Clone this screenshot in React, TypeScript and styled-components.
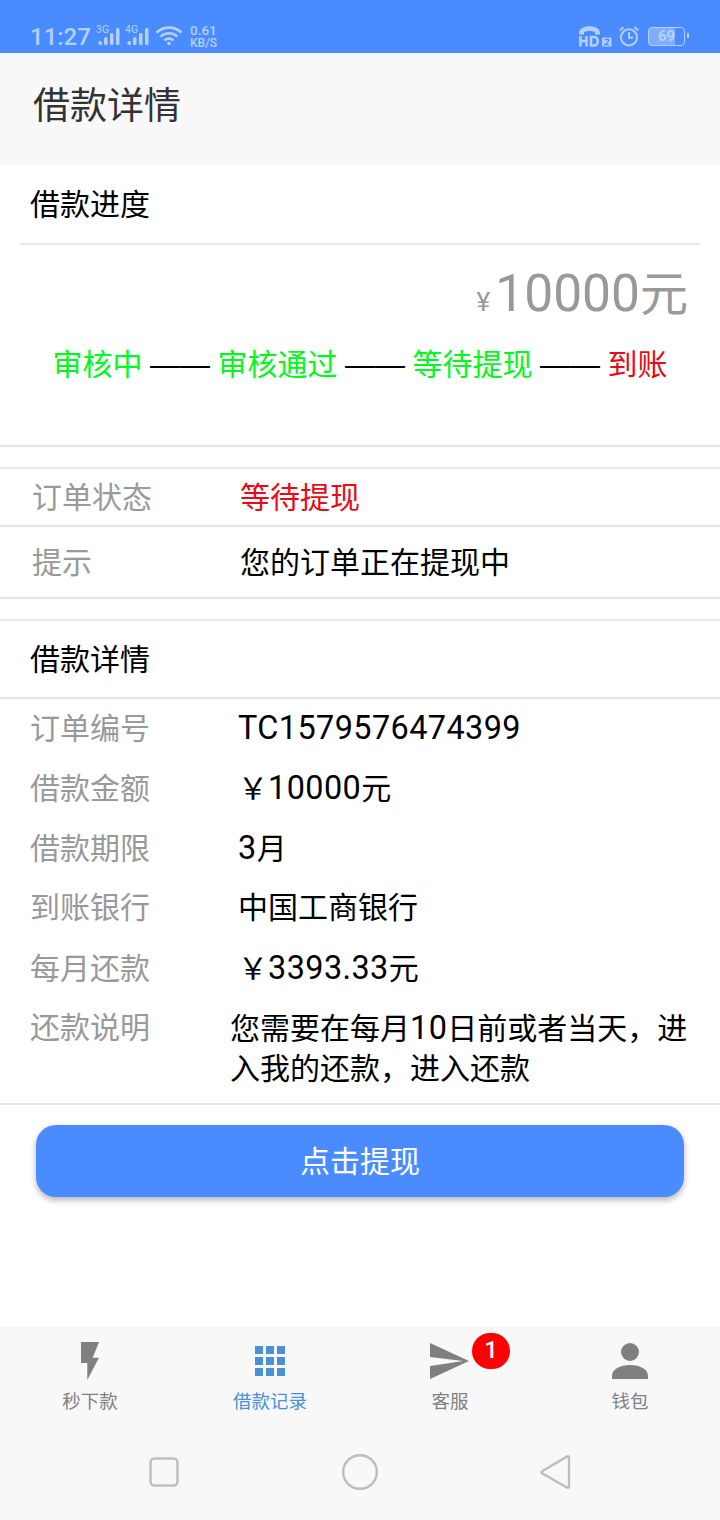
import React from "react";
import styled, { createGlobalStyle } from "styled-components";

const Global = createGlobalStyle`
  html, body { margin: 0; padding: 0; background: #fff; }
  body { font-family: "Roboto", "Noto Sans CJK SC", sans-serif; }
  * { box-sizing: border-box; }
`;

const Page = styled.div`
  width: 720px;
  height: 1520px;
  display: flex;
  flex-direction: column;
  overflow: hidden;
  background: #fff;
`;

const Latin = styled.span`
  font-size: 1.08em;
  letter-spacing: 0.013em;
`;

const StatusBar = styled.div`
  height: 53px;
  flex: none;
  background: #4a8cff;
  display: flex;
  align-items: flex-end;
  justify-content: space-between;
  padding: 0 35px 1px 31px;
  color: #b5d0ff;
`;
const StatusGroup = styled.div`
  display: flex;
  align-items: center;
  height: 32px;
`;
const Clock = styled.span`
  font: 500 24px/30px "Roboto", sans-serif;
  padding-top: 2px;
  width: 67px;
  margin-left: -1px;
  white-space: nowrap;
`;
const SignalIcon = styled.svg`
  width: 24px;
  height: 20px;
  margin-right: 5px;
  fill: #b5d0ff;
  overflow: visible;
`;
const Speed = styled.span`
  font: 500 12px/13px "Roboto", sans-serif;
  margin-left: 7px;
  padding-top: 2px;
  display: flex;
  flex-direction: column;
`;
const SpeedValue = styled.span`
  font-size: 13.5px;
`;
const Battery = styled.div`
  width: 37px;
  height: 19px;
  border: 1.5px solid #b5d0ff;
  border-radius: 4px;
  font: 700 15px/16px "Roboto", sans-serif;
  text-align: center;
  background: linear-gradient(90deg, #7fadff 73%, transparent 73%);
  margin-left: 8px;
  position: relative;
  &::after {
    content: "";
    position: absolute;
    right: -5px;
    top: 5px;
    width: 2px;
    height: 5px;
    background: #b5d0ff;
  }
`;

const Header = styled.header`
  height: 112px;
  flex: none;
  background: #f8f8f8;
  display: flex;
  align-items: center;
  padding: 0 33px 12px;
  font-size: 37px;
  color: #333;
`;

const ProgressCard = styled.section`
  height: 282px;
  flex: none;
  padding: 0 20px;
  border-bottom: 2px solid #e5e5e5;
  display: flex;
  flex-direction: column;
`;
const CardTitle = styled.div`
  height: 80px;
  flex: none;
  display: flex;
  align-items: center;
  padding: 0 10px 4px;
  font-size: 30px;
  color: #000;
  border-bottom: 2px solid #e5e5e5;
`;
const Amount = styled.div`
  display: flex;
  justify-content: flex-end;
  align-items: baseline;
  padding: 17px 12px 0 0;
  color: #999;
  font-size: 48px;
  line-height: 64px;
`;
const AmountDigits = styled.span`
  font-size: 51.5px;
`;
const Yen = styled.span`
  font-size: 26px;
  margin-right: 5px;
`;
const Steps = styled.div`
  margin-top: 9px;
  display: flex;
  justify-content: center;
  font-size: 30px;
  line-height: 44px;
  white-space: pre;
  color: #000;
`;
const Step = styled.span<{ $tone: "green" | "red" }>`
  color: ${(p) => (p.$tone === "green" ? "#00f820" : "#e80a14")};
`;
const Dash = styled.span`
  margin: 0 7.5px;
  font-family: "Liberation Sans", sans-serif;
`;

const Spacer = styled.div`
  height: 20px;
  flex: none;
`;

const StatusSection = styled.section`
  flex: none;
  border-top: 2px solid #e5e5e5;
  border-bottom: 2px solid #e5e5e5;
`;
const StatusRow = styled.div<{ $h: number; $divider?: boolean }>`
  height: ${(p) => p.$h}px;
  display: flex;
  align-items: center;
  padding: 0 0 4px 32px;
  font-size: 30px;
  border-bottom: ${(p) => (p.$divider ? "2px solid #e5e5e5" : "none")};
`;
const StatusLabel = styled.span`
  width: 208px;
  color: #999;
`;
const StatusValue = styled.span<{ $red?: boolean }>`
  color: ${(p) => (p.$red ? "#e80a14" : "#000")};
`;

const DetailSection = styled.section`
  flex: none;
  border-top: 2px solid #e5e5e5;
  border-bottom: 2px solid #e5e5e5;
  height: 486px;
`;
const DetailTitle = styled.div`
  height: 78px;
  display: flex;
  align-items: center;
  padding: 0 30px 4px;
  font-size: 30px;
  color: #000;
  border-bottom: 2px solid #e5e5e5;
`;
const DetailList = styled.div`
  display: flex;
  flex-direction: column;
  margin-top: -1px;
`;
const DetailRow = styled.div`
  height: 60px;
  display: flex;
  align-items: baseline;
  line-height: 60px;
  padding-left: 30px;
  font-size: 30px;
  white-space: pre;
`;
const DetailLabel = styled.span`
  width: 208px;
  flex: none;
  color: #999;
`;
const DetailValue = styled.span`
  color: #000;
`;
const NoteRow = styled.div`
  display: flex;
  padding: 0 30px;
  font-size: 30px;
  line-height: 40px;
  margin-top: 10px;
`;
const NoteLabel = styled.span`
  width: 200px;
  flex: none;
  color: #999;
`;
const NoteText = styled.span`
  color: #000;
`;

const ActionWrap = styled.div`
  flex: 1;
  padding: 20px 36px 0;
`;
const PrimaryButton = styled.button`
  width: 648px;
  height: 72px;
  border: 0;
  border-radius: 20px;
  background: #4a8cff;
  color: #fff;
  padding: 0 0 4px;
  font: 400 30px "Roboto", "Noto Sans CJK SC", sans-serif;
  box-shadow: 0 3px 6px rgba(0, 0, 0, 0.3);
`;

const BottomArea = styled.div`
  height: 193px;
  flex: none;
  background: #f8f8f8;
  display: flex;
  flex-direction: column;
`;
const TabBar = styled.nav`
  display: grid;
  grid-template-columns: repeat(4, 180px);
  height: 100px;
  padding-top: 13px;
`;
const Tab = styled.div<{ $active?: boolean }>`
  display: flex;
  flex-direction: column;
  align-items: center;
  color: ${(p) => (p.$active ? "#4a90d9" : "#808080")};
  font-size: 18.5px;
  line-height: 26px;
  position: relative;
`;
const TabIcon = styled.div`
  height: 42px;
  width: 100%;
  display: flex;
  justify-content: center;
  align-items: center;
  margin-bottom: 7px;
`;
const Badge = styled.span`
  position: absolute;
  left: 112px;
  top: -7px;
  width: 38px;
  height: 36px;
  border-radius: 18px;
  background: #ff0000;
  color: #fff;
  font: 500 24px/34px "Roboto", sans-serif;
  text-align: center;
`;
const NavKeys = styled.div`
  height: 89px;
  display: flex;
  justify-content: center;
  align-items: center;
  gap: 160px;
`;
const NavKey = styled.svg`
  width: 36px;
  height: 36px;
  fill: none;
  stroke: #bdbdbd;
  stroke-width: 2.4;
  stroke-linejoin: round;
`;

function Signal({ label }: { label: string }) {
  return (
    <SignalIcon viewBox="0 0 24 20">
      <text x="-1" y="7" fontSize="10.5" fontFamily="Roboto, sans-serif">{label}</text>
      <rect x="1.5" y="15" width="3.5" height="4" rx="1.5" />
      <rect x="7" y="11" width="3.5" height="8" rx="1.5" />
      <rect x="13" y="7" width="3.5" height="12" rx="1.5" />
      <rect x="19" y="2" width="3.5" height="17" rx="1.5" />
    </SignalIcon>
  );
}

export default function App() {
  return (
    <Page>
      <Global />
      <StatusBar>
        <StatusGroup>
          <Clock>11:27</Clock>
          <Signal label="3G" />
          <Signal label="4G" />
          <svg width="28" height="20" viewBox="0 0 28 20" fill="none" stroke="#b5d0ff" strokeWidth="2.6">
            <path d="M1.5 6.5C9 0 19 0 26.5 6.5" />
            <path d="M5.5 10.5C10.5 6.2 17.5 6.2 22.5 10.5" />
            <path d="M9.5 14.5C12.2 12.3 15.8 12.3 18.5 14.5" />
            <circle cx="14" cy="17.5" r="1.8" fill="#b5d0ff" stroke="none" />
          </svg>
          <Speed>
            <SpeedValue>0.61</SpeedValue>
            <span>KB/S</span>
          </Speed>
        </StatusGroup>
        <StatusGroup>
          <svg width="34" height="22" viewBox="0 0 34 22" fill="none">
            <path d="M1 8C1 -1 22 -1 22 8V9.5H17V7C14 5.5 9 5.5 6 7V9.5H1Z" fill="#b5d0ff" />
            <path d="M2.5 11V21.5M8.5 11V21.5M2.5 16H8.5" stroke="#b5d0ff" strokeWidth="2.6" />
            <path d="M13 12V20.5H16C21 20.5 21 12 16 12Z" stroke="#b5d0ff" strokeWidth="2.6" />
            <rect x="24" y="12.5" width="9.5" height="9" rx="1" fill="#b5d0ff" />
            <path d="M26.7 15Q29 13.5 30.8 15Q30.8 17 26.7 19.7H31" stroke="#4a8cff" strokeWidth="1.3" />
          </svg>
          <svg width="22" height="22" viewBox="0 0 24 24" fill="none" stroke="#b5d0ff" strokeWidth="2.2" style={{ marginLeft: 6 }}>
            <circle cx="12" cy="13.5" r="8.8" />
            <path d="M12 8V14H16.5" />
            <path d="M2 6L6 2.5M22 6L18 2.5" />
          </svg>
          <Battery>69</Battery>
        </StatusGroup>
      </StatusBar>

      <Header>借款详情</Header>

      <ProgressCard>
        <CardTitle>借款进度</CardTitle>
        <Amount>
          <Yen>¥</Yen>
          <AmountDigits>10000</AmountDigits>元
        </Amount>
        <Steps>
          <Step $tone="green">审核中</Step>
          <Dash>——</Dash>
          <Step $tone="green">审核通过</Step>
          <Dash>——</Dash>
          <Step $tone="green">等待提现</Step>
          <Dash>——</Dash>
          <Step $tone="red">到账</Step>
        </Steps>
      </ProgressCard>

      <Spacer />

      <StatusSection>
        <StatusRow $h={58} $divider>
          <StatusLabel>订单状态</StatusLabel>
          <StatusValue $red>等待提现</StatusValue>
        </StatusRow>
        <StatusRow $h={70}>
          <StatusLabel>提示</StatusLabel>
          <StatusValue>您的订单正在提现中</StatusValue>
        </StatusRow>
      </StatusSection>

      <Spacer />

      <DetailSection>
        <DetailTitle>借款详情</DetailTitle>
        <DetailList>
          <DetailRow>
            <DetailLabel>订单编号</DetailLabel>
            <DetailValue><Latin>TC1579576474399</Latin></DetailValue>
          </DetailRow>
          <DetailRow>
            <DetailLabel>借款金额</DetailLabel>
            <DetailValue>￥<Latin>10000</Latin>元</DetailValue>
          </DetailRow>
          <DetailRow>
            <DetailLabel>借款期限</DetailLabel>
            <DetailValue><Latin>3</Latin>月</DetailValue>
          </DetailRow>
          <DetailRow>
            <DetailLabel>到账银行</DetailLabel>
            <DetailValue>中国工商银行</DetailValue>
          </DetailRow>
          <DetailRow>
            <DetailLabel>每月还款</DetailLabel>
            <DetailValue>￥<Latin>3393.33</Latin>元</DetailValue>
          </DetailRow>
          <NoteRow>
            <NoteLabel>还款说明</NoteLabel>
            <NoteText>您需要在每月<Latin>10</Latin>日前或者当天，进入我的还款，进入还款</NoteText>
          </NoteRow>
        </DetailList>
      </DetailSection>

      <ActionWrap>
        <PrimaryButton>点击提现</PrimaryButton>
      </ActionWrap>

      <BottomArea>
        <TabBar>
          <Tab>
            <TabIcon>
              <svg width="18" height="38" viewBox="0 0 18 38">
                <path d="M0 0H18L11.7 15.7H18L6.3 38V21H0Z" fill="#808080" />
              </svg>
            </TabIcon>
            秒下款
          </Tab>
          <Tab $active>
            <TabIcon>
              <svg width="30" height="30" viewBox="0 0 30 30" fill="#4a90d9">
                {[0, 11, 22].flatMap((y) =>
                  [0, 11, 22].map((x) => <rect key={`${x}-${y}`} x={x} y={y} width="8" height="8" />)
                )}
              </svg>
            </TabIcon>
            借款记录
          </Tab>
          <Tab>
            <TabIcon>
              <svg width="40" height="36" viewBox="0 0 40 36">
                <path d="M0 0L39 18L0 36V23L33 18L0 14Z" fill="#808080" />
              </svg>
            </TabIcon>
            客服
            <Badge>1</Badge>
          </Tab>
          <Tab>
            <TabIcon>
              <svg width="36" height="36" viewBox="0 0 36 36" fill="#808080">
                <circle cx="18" cy="9" r="9" />
                <path d="M0 36V33C0 26 8 22 18 22S36 26 36 33V36Z" />
              </svg>
            </TabIcon>
            钱包
          </Tab>
        </TabBar>
        <NavKeys>
          <NavKey viewBox="0 0 36 36">
            <rect x="4.5" y="4.5" width="27" height="27" rx="4" />
          </NavKey>
          <NavKey viewBox="0 0 36 36">
            <circle cx="18" cy="18" r="16.8" />
          </NavKey>
          <NavKey viewBox="0 0 36 36">
            <path d="M31 3.5C31 2.5 30 2 29 2.6L4.5 17C3.2 17.7 3.2 18.7 4.5 19.5L29 33.5C30 34 31 33.5 31 32.5Z" />
          </NavKey>
        </NavKeys>
      </BottomArea>
    </Page>
  );
}
